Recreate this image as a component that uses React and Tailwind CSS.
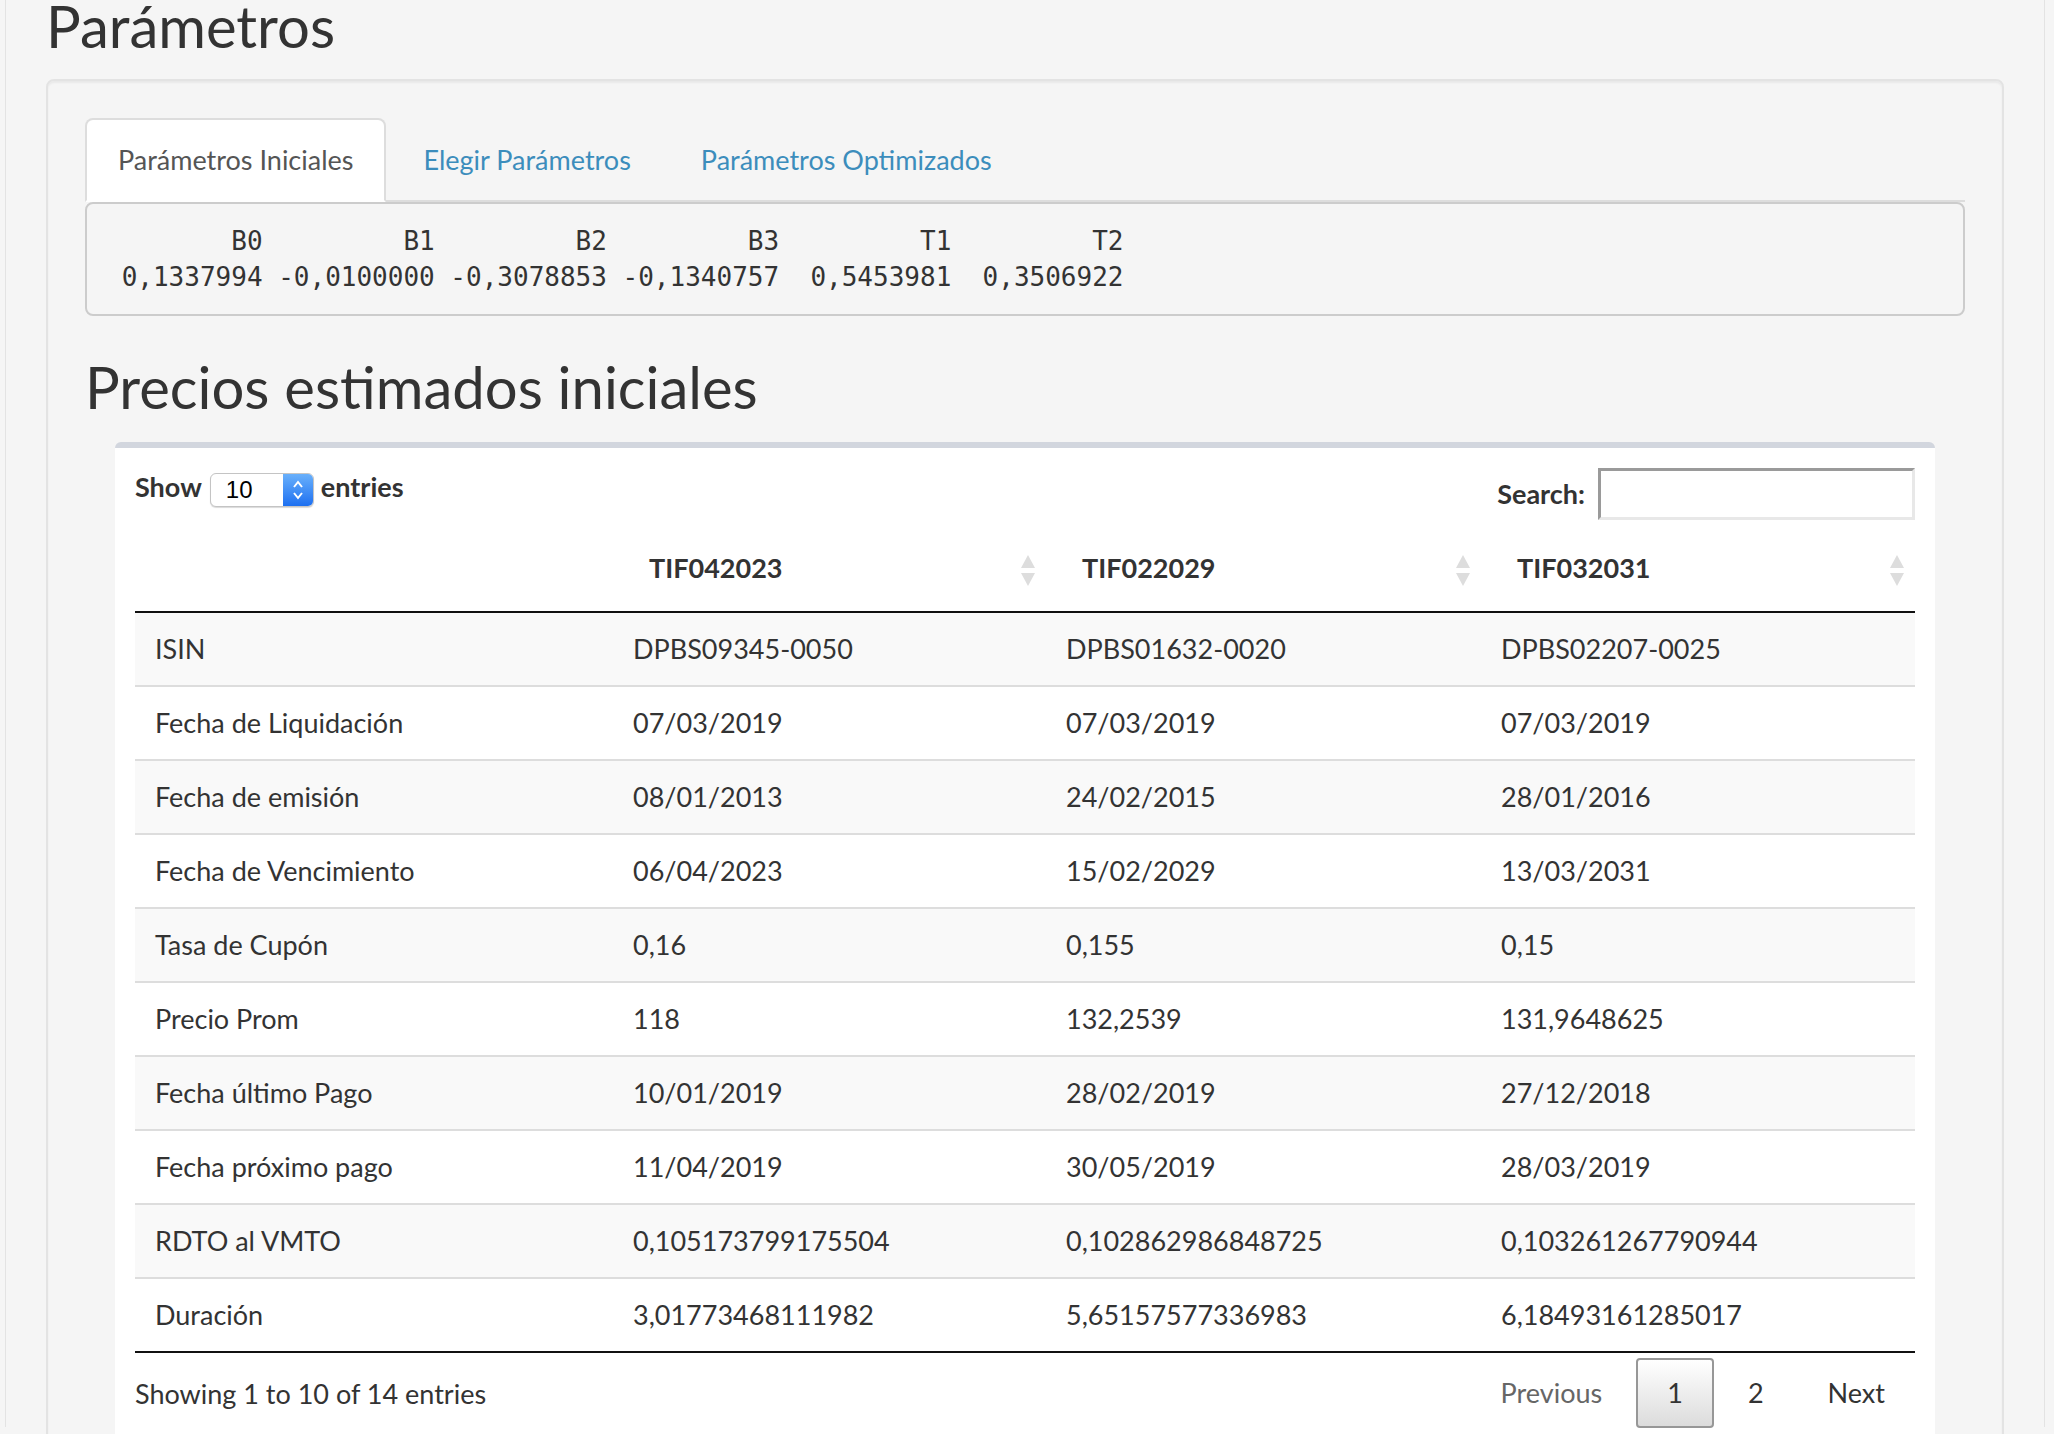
import React from "react";

const rows = [
  ["ISIN", "DPBS09345-0050", "DPBS01632-0020", "DPBS02207-0025"],
  ["Fecha de Liquidación", "07/03/2019", "07/03/2019", "07/03/2019"],
  ["Fecha de emisión", "08/01/2013", "24/02/2015", "28/01/2016"],
  ["Fecha de Vencimiento", "06/04/2023", "15/02/2029", "13/03/2031"],
  ["Tasa de Cupón", "0,16", "0,155", "0,15"],
  ["Precio Prom", "118", "132,2539", "131,9648625"],
  ["Fecha último Pago", "10/01/2019", "28/02/2019", "27/12/2018"],
  ["Fecha próximo pago", "11/04/2019", "30/05/2019", "28/03/2019"],
  ["RDTO al VMTO", "0,105173799175504", "0,102862986848725", "0,103261267790944"],
  ["Duración", "3,01773468111982", "5,65157577336983", "6,18493161285017"],
];

function SortIcon() {
  return (
    <svg
      className="absolute right-[11px] top-1/2 -translate-y-1/2"
      width="14"
      height="32"
      viewBox="0 0 14 32"
    >
      <polygon points="7,0 14,13 0,13" fill="#dddddd" />
      <polygon points="0,18 14,18 7,31" fill="#dddddd" />
    </svg>
  );
}

export default function App() {
  const pre1 = "        B0         B1         B2         B3         T1         T2";
  const pre2 = " 0,1337994 -0,0100000 -0,3078853 -0,1340757  0,5453981  0,3506922";
  return (
    <div className="h-[1434px] overflow-hidden bg-[#f5f5f5] font-['Lato',sans-serif] text-[#333]">
      <div className="ml-[5px] w-[2040px] h-full border-x border-[#e3e3e3] px-[40px]">
        <h1 className="m-0 -mt-[7px] text-[58px] leading-[66px] font-normal">Parámetros</h1>

        <div className="mt-[20px] rounded-[8px] border-2 border-[#e3e3e3] bg-[#f5f5f5] p-[37px] pb-[400px] shadow-[inset_0_2px_2px_rgba(0,0,0,0.05)]">
          {/* Tabs */}
          <div className="flex border-b-2 border-[#dddddd] text-[27px] leading-[40px]">
            <div className="-mb-[2px] mr-[4px] rounded-t-[8px] border-2 border-[#dddddd] border-b-transparent bg-white px-[31px] py-[20px] text-[#555]">
              Parámetros Iniciales
            </div>
            <div className="-mb-[2px] mr-[4px] rounded-t-[8px] border-2 border-transparent px-[31px] py-[20px] text-[#3c8dbc]">
              Elegir Parámetros
            </div>
            <div className="-mb-[2px] mr-[4px] rounded-t-[8px] border-2 border-transparent px-[31px] py-[20px] text-[#3c8dbc]">
              Parámetros Optimizados
            </div>
          </div>

          {/* Pre */}
          <pre className="m-0 rounded-[8px] border-2 border-[#cccccc] bg-[#f5f5f5] px-[19px] py-[19px] font-['DejaVu_Sans_Mono',monospace] text-[26px] leading-[36px] text-[#333]">
            {pre1 + "\n" + pre2}
          </pre>

          <h2 className="m-0 mt-[38px] mb-[22px] text-[58px] leading-[66px] font-normal">
            Precios estimados iniciales
          </h2>

          {/* Box */}
          <div className="mx-[30px] rounded-t-[6px] border-t-[6px] border-[#d2d6de] bg-white px-[20px] pb-[200px]">
            {/* controls */}
            <div className="flex h-[72px] items-start justify-between pt-[20px]">
              <div className="mt-[5px] flex h-[34px] items-center text-[27px] font-bold">
                <span className="relative -top-[3px]">Show</span>
                <div className="ml-[8px] flex h-[34px] w-[104px] overflow-hidden rounded-[6px] border border-[#c4c4c4] bg-white shadow-[0_1px_1px_rgba(0,0,0,0.15)]">
                  <div className="flex flex-1 items-center pl-[15px] font-['Liberation_Sans',sans-serif] text-[24px] font-normal text-black">
                    10
                  </div>
                  <div className="flex w-[30px] items-center justify-center bg-gradient-to-b from-[#69b0fb] to-[#1c6ff0]">
                    <svg width="14" height="24" viewBox="0 0 14 24">
                      <polyline points="3,9 7,4 11,9" fill="none" stroke="white" strokeWidth="2" />
                      <polyline points="3,15 7,20 11,15" fill="none" stroke="white" strokeWidth="2" />
                    </svg>
                  </div>
                </div>
                <span className="relative -top-[3px] ml-[7px]">entries</span>
              </div>
              <div className="flex items-center text-[27px] font-bold">
                <span>Search:</span>
                <div className="ml-[13px] h-[52px] w-[317px] border-[3px] border-t-[#9a9a9a] border-l-[#9a9a9a] border-r-[#e8e8e8] border-b-[#e8e8e8] bg-white" />
              </div>
            </div>

            {/* table */}
            <div className="mt-[11px] text-[27px]">
              <div className="grid grid-cols-[478px_433px_435px_434px] border-b-2 border-[#111] font-bold leading-[40px]">
                <div className="pt-[17px] pb-[23px] pl-[20px]"></div>
                {["TIF042023", "TIF022029", "TIF032031"].map((h) => (
                  <div key={h} className="relative pt-[17px] pb-[23px] pl-[36px] pr-[36px]">
                    {h}
                    <SortIcon />
                  </div>
                ))}
              </div>
              {rows.map((r, i) => (
                <div
                  key={i}
                  className={
                    "grid grid-cols-[478px_433px_435px_434px] leading-[40px] " +
                    (i % 2 === 0 ? "bg-[#f9f9f9] " : "bg-white ") +
                    (i === rows.length - 1 ? "border-b-2 border-[#111]" : "border-b-2 border-[#dddddd]")
                  }
                >
                  {r.map((c, j) => (
                    <div key={j} className="py-[16px] pl-[20px] pr-[20px] whitespace-nowrap">
                      {c}
                    </div>
                  ))}
                </div>
              ))}
              {/* footer */}
              <div className="mt-[5px] flex items-start justify-between leading-[40px]">
                <div className="pt-[16px]">Showing 1 to 10 of 14 entries</div>
                <div className="flex">
                  <div className="ml-[4px] rounded-[4px] border-2 border-transparent px-[28px] py-[13px] text-[#666]">
                    Previous
                  </div>
                  <div className="ml-[4px] rounded-[4px] border-2 border-[#979797] bg-gradient-to-b from-white to-[#dcdcdc] px-[29px] py-[13px] text-[#333]">
                    1
                  </div>
                  <div className="ml-[4px] rounded-[4px] border-2 border-transparent px-[28px] py-[13px] text-[#333]">
                    2
                  </div>
                  <div className="ml-[4px] rounded-[4px] border-2 border-transparent px-[28px] py-[13px] text-[#333]">
                    Next
                  </div>
                </div>
              </div>
            </div>
          </div>
        </div>
      </div>
    </div>
  );
}
